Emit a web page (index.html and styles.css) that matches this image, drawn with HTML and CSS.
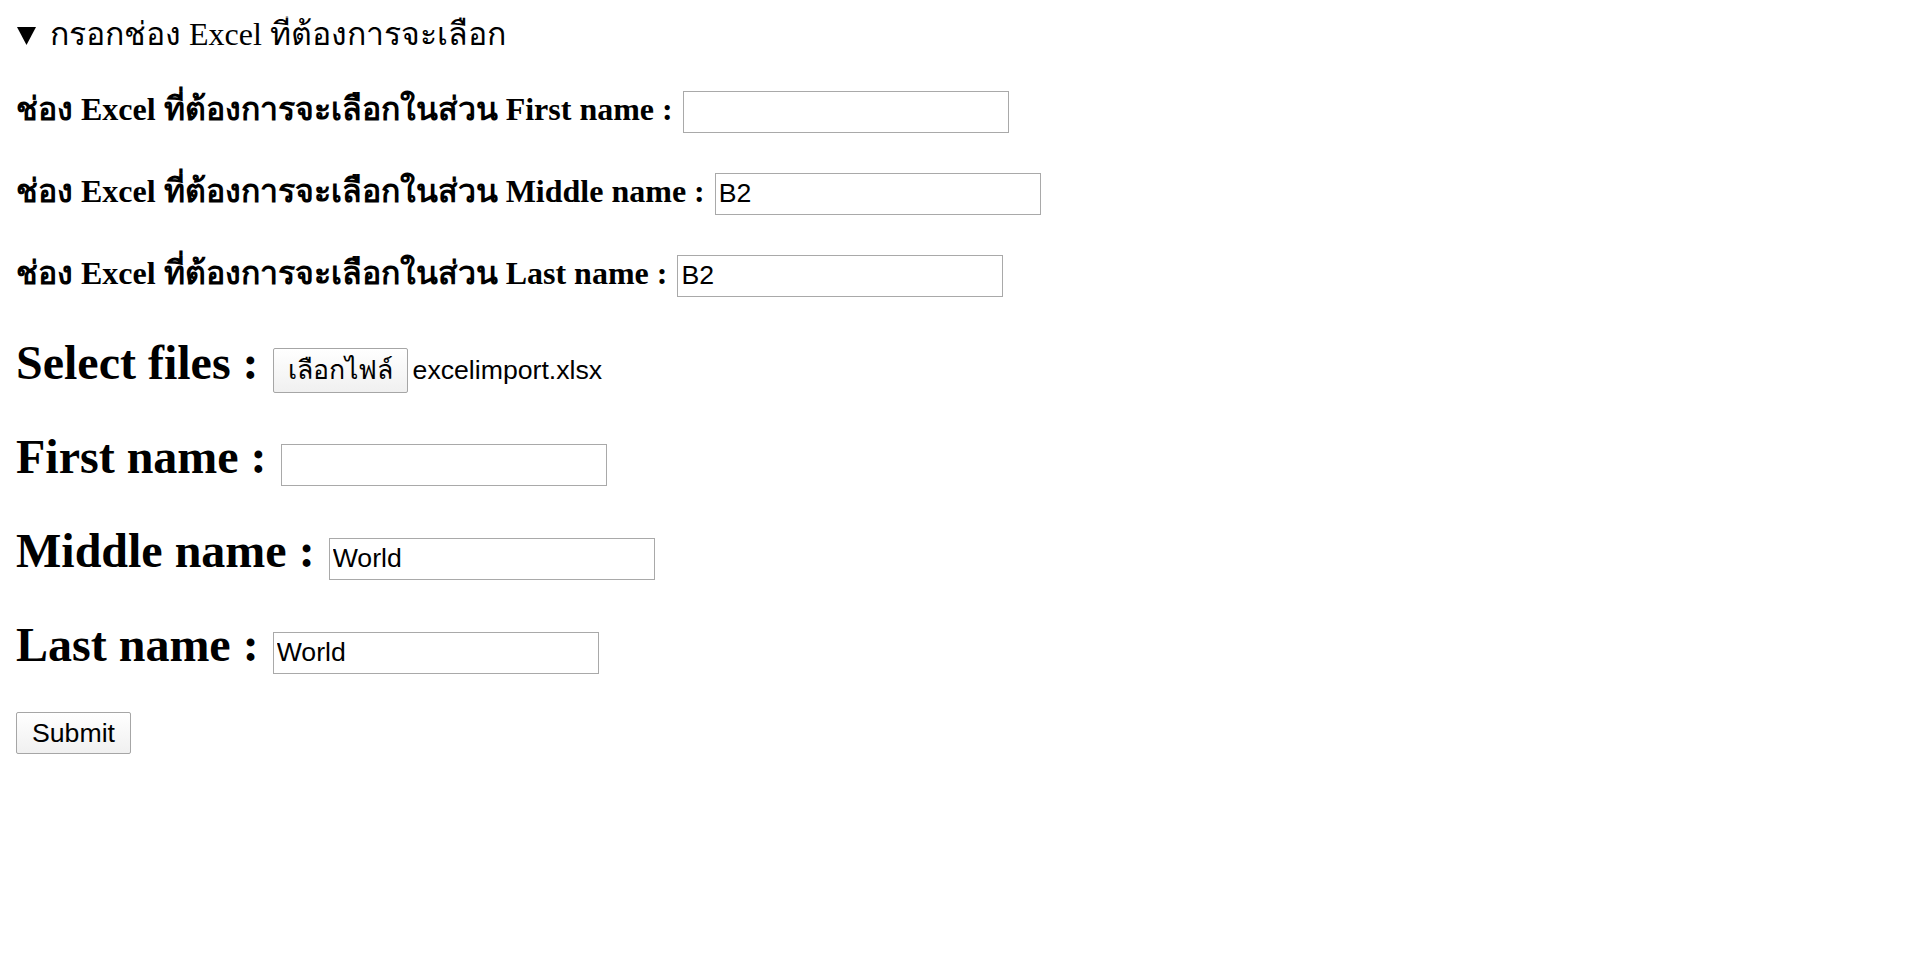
FILE: index.html
```html
<!DOCTYPE html>
<html lang="th">
<head>
    <meta charset="UTF-8">
    <meta name="viewport" content="width=device-width, initial-scale=1.0">
    <link rel="stylesheet" href="styles.css">
    <title>Import Excel</title>
</head>
<body>
    <form id="import-form" action="/" method="post">
        <details open>
            <summary><span class="caret"><svg width="19" height="18" viewBox="0 0 19 18"><path d="M0 0 H19 L9.5 18 Z" fill="#000"/></svg></span>กรอกช่อง Excel ที่ต้องการจะเลือก</summary>
            <h4 class="cell-row">ช่อง Excel ที่ต้องการจะเลือกในส่วน First name : <input class="text-input" type="text" name="first_cell" autocomplete="off"></h4>
            <h4 class="cell-row">ช่อง Excel ที่ต้องการจะเลือกในส่วน Middle name : <input class="text-input" type="text" name="middle_cell" value="B2" autocomplete="off"></h4>
            <h4 class="cell-row">ช่อง Excel ที่ต้องการจะเลือกในส่วน Last name : <input class="text-input" type="text" name="last_cell" value="B2" autocomplete="off"></h4>
        </details>
        <h2 class="field-row">Select files : <button class="file-btn" type="button">เลือกไฟล์</button><span class="file-name">excelimport.xlsx</span></h2>
        <h2 class="field-row">First name : <input class="text-input" type="text" name="first_name" autocomplete="off"></h2>
        <h2 class="field-row">Middle name : <input class="text-input" type="text" name="middle_name" value="World" autocomplete="off"></h2>
        <h2 class="field-row">Last name : <input class="text-input" type="text" name="last_name" value="World" autocomplete="off"></h2>
        <div class="actions">
            <button class="submit-btn" type="submit">Submit</button>
        </div>
    </form>
</body>
</html>
```

FILE: styles.css
```css
body {
 margin: 16px;
 font-family: "Liberation Serif", "Times New Roman", serif;
 font-size: 32px;
 color: #000;
 background: #fff;
}

details {
 padding-bottom: 2px;
}
summary {
 display: block;
 list-style: none;
 line-height: 36px;
 cursor: pointer;
}
summary::-webkit-details-marker {
 display: none;
}
.caret {
 display: inline-block;
 width: 33px;
 padding-left: 1px;
}

.cell-row {
 font-size: 32px;
 line-height: 50px;
 margin: 32px 0 0 0;
}
.field-row {
 font-size: 48px;
 line-height: 62px;
 margin: 32px 0 0 0;
}

.text-input {
 box-sizing: border-box;
 width: 326px;
 height: 42px;
 margin: 0 0 0 2px;
 padding: 0 3px;
 border: 1px solid #a9a9a9;
 font-family: "Liberation Sans", Arial, sans-serif;
 font-size: 26.67px;
 line-height: normal;
 color: #000;
 background: #fff;
 vertical-align: baseline;
}
.text-input:focus {
 outline: 0;
}

.file-btn,
.submit-btn {
 box-sizing: border-box;
 height: 45px;
 padding: 0 14px;
 border: 1px solid #a6a6a6;
 border-radius: 2px;
 background: linear-gradient(#ffffff, #f0f0f0);
 font-family: "Liberation Sans", Arial, sans-serif;
 font-size: 26.67px;
 line-height: 31px;
 color: #000;
}
.file-btn {
 margin: 0 5px 0 2px;
}
.file-name {
 font-family: "Liberation Sans", Arial, sans-serif;
 font-size: 26.67px;
 font-weight: normal;
 line-height: normal;
}

.actions {
 margin-top: 36px;
}
.submit-btn {
 display: block;
 height: 42px;
 padding: 0 15px;
}
```
